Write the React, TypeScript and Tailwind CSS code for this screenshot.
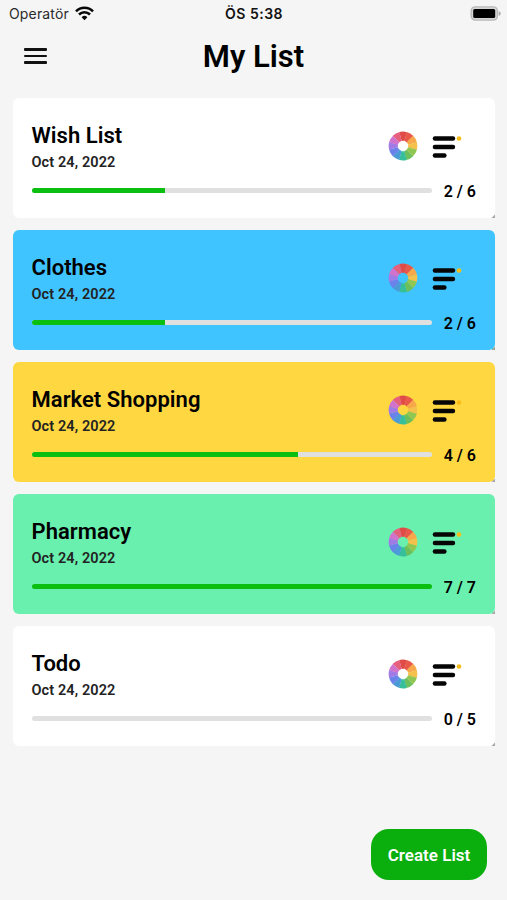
import React from "react";

type ListItem = {
  id: number;
  title: string;
  date: string;
  done: number;
  total: number;
  cardColor: string;
  cornerColor: string;
};

const lists: ListItem[] = [
  { id: 1, title: "Wish List", date: "Oct 24, 2022", done: 2, total: 6, cardColor: "bg-white", cornerColor: "bg-[#a8a8a8]" },
  { id: 2, title: "Clothes", date: "Oct 24, 2022", done: 2, total: 6, cardColor: "bg-[#40c4ff]", cornerColor: "bg-[#9aa58f]" },
  { id: 3, title: "Market Shopping", date: "Oct 24, 2022", done: 4, total: 6, cardColor: "bg-[#ffd740]", cornerColor: "bg-[#a8a8a8]" },
  { id: 4, title: "Pharmacy", date: "Oct 24, 2022", done: 7, total: 7, cardColor: "bg-[#69f0ae]", cornerColor: "bg-[#a8a8a8]" },
  { id: 5, title: "Todo", date: "Oct 24, 2022", done: 0, total: 5, cardColor: "bg-white", cornerColor: "bg-[#a8a8a8]" },
];

const wheelColors = [
  "#e04b48",
  "#e8594a",
  "#f7a84a",
  "#f3c24c",
  "#8fc752",
  "#6cc05c",
  "#35bf9b",
  "#4b9cd6",
  "#6a83ea",
  "#a07be6",
  "#d172cc",
  "#e5607c",
];

const wheelPoint = (radius: number, degrees: number) => {
  const angle = ((degrees - 90) * Math.PI) / 180;
  return `${(15 + radius * Math.cos(angle)).toFixed(2)} ${(15 + radius * Math.sin(angle)).toFixed(2)}`;
};

const ColorWheel = () => (
  <svg width="30" height="30" viewBox="0 0 30 30">
    {wheelColors.map((color, i) => {
      const start = i * 30 - 15;
      const end = start + 31;
      return (
        <path
          key={color}
          fill={color}
          d={`M${wheelPoint(14.4, start)}A14.4 14.4 0 0 1 ${wheelPoint(14.4, end)}L${wheelPoint(5.2, end)}A5.2 5.2 0 0 0 ${wheelPoint(5.2, start)}Z`}
        />
      );
    })}
  </svg>
);

const SortIcon = () => (
  <svg width="30" height="24" viewBox="0 0 30 24">
    <g stroke="#050505" strokeWidth="4.4" strokeLinecap="round">
      <path d="M2.9 3.5H21" />
      <path d="M2.9 12H21" />
      <path d="M2.9 20.5H12.4" />
    </g>
    <circle cx="27" cy="3.5" r="2.3" fill="#f6bd16" />
  </svg>
);

const StatusBar = () => (
  <div className="grid h-[26px] grid-cols-3 items-center pl-[9px] pr-1.5 font-['Inter',sans-serif] text-[14px] text-[#2a2a2a]">
    <div className="flex items-center gap-[6px]">
      <span className="tracking-[0.15px]">Operatör</span>
      <svg width="19" height="15" viewBox="0 0 19 15" fill="none" stroke="#080808" strokeWidth="2.6">
        <path d="M1 5.3a12 12 0 0 1 17 0" />
        <path d="M4 8.5a7.8 7.8 0 0 1 11 0" />
        <path d="M6.6 11.2a4.1 4.1 0 0 1 5.8 0L9.5 14.2Z" fill="#080808" stroke="none" />
      </svg>
    </div>
    <span className="-ml-0.5 text-center font-semibold tracking-[0.5px] text-[#111]">ÖS 5:38</span>
    <div className="flex justify-end">
      <svg width="31" height="15" viewBox="0 0 31 15">
        <rect x="1.2" y="0.9" width="26.2" height="13.2" rx="4" fill="#d6d6d6" stroke="#b8b8b8" strokeWidth="1.4" />
        <rect x="3.2" y="2.9" width="22" height="9.2" rx="1.6" fill="#000" />
        <path d="M28.7 5v5q2-.8 2-2.5T28.7 5Z" fill="#aaa" />
      </svg>
    </div>
  </div>
);

const ListCard = ({ item }: { item: ListItem }) => (
  <div className={`relative h-[120px] w-full rounded-[6px] pl-[18.5px] pr-[19px] pt-[25px] ${item.cardColor}`}>
    <div className="flex h-[51px] justify-between">
      <div>
        <h2 className="text-[22px] font-semibold leading-[26px] tracking-[0.03px] text-black">{item.title}</h2>
        <p className="mt-[5px] text-[14.5px] font-semibold leading-[18px] tracking-[0.1px] text-[#222]">{item.date}</p>
      </div>
      <div className="flex items-start gap-[14px] pr-[14px] pt-[8px]">
        <ColorWheel />
        <div className="pt-[4px]">
          <SortIcon />
        </div>
      </div>
    </div>
    <div className="mt-[6.5px] flex h-5 items-center justify-between">
      <div className="h-[5px] w-[400px] overflow-hidden rounded-full bg-[#e0e0e0]">
        <div className="h-full bg-[#0abf0f]" style={{ width: `${(item.done / item.total) * 100}%` }} />
      </div>
      <span className="pt-[2px] text-[16px] font-semibold leading-5 text-black">
        {item.done} / {item.total}
      </span>
    </div>
    <span className={`absolute bottom-0 right-0 size-[4px] [clip-path:polygon(100%_0,100%_100%,0_100%)] ${item.cornerColor}`} />
  </div>
);

const App = () => {
  return (
    <div className="flex h-[900px] w-[507px] flex-col bg-[#f5f5f5] font-['Roboto',sans-serif]">
      <StatusBar />
      <header className="grid h-[60px] grid-cols-[1fr_auto_1fr] items-center px-6">
        <button aria-label="Menu" className="flex w-[23px] flex-col gap-[4px]">
          <span className="h-[2.5px] rounded-[1px] bg-[#111]" />
          <span className="h-[2.5px] rounded-[1px] bg-[#111]" />
          <span className="h-[2.5px] rounded-[1px] bg-[#111]" />
        </button>
        <h1 className="pt-0.5 text-[31px] font-semibold leading-9 text-black">My List</h1>
      </header>
      <main className="flex flex-col gap-3 pl-[13px] pr-3 pt-[12.4px]">
        {lists.map((item) => (
          <ListCard key={item.id} item={item} />
        ))}
      </main>
      <div className="mt-auto flex justify-end pb-5 pr-5">
        <button className="h-[51px] w-[116px] rounded-[18px] bg-[#0aae0d] pt-0.5 text-[17px] font-semibold text-white">
          Create List
        </button>
      </div>
    </div>
  );
};

export default App;
